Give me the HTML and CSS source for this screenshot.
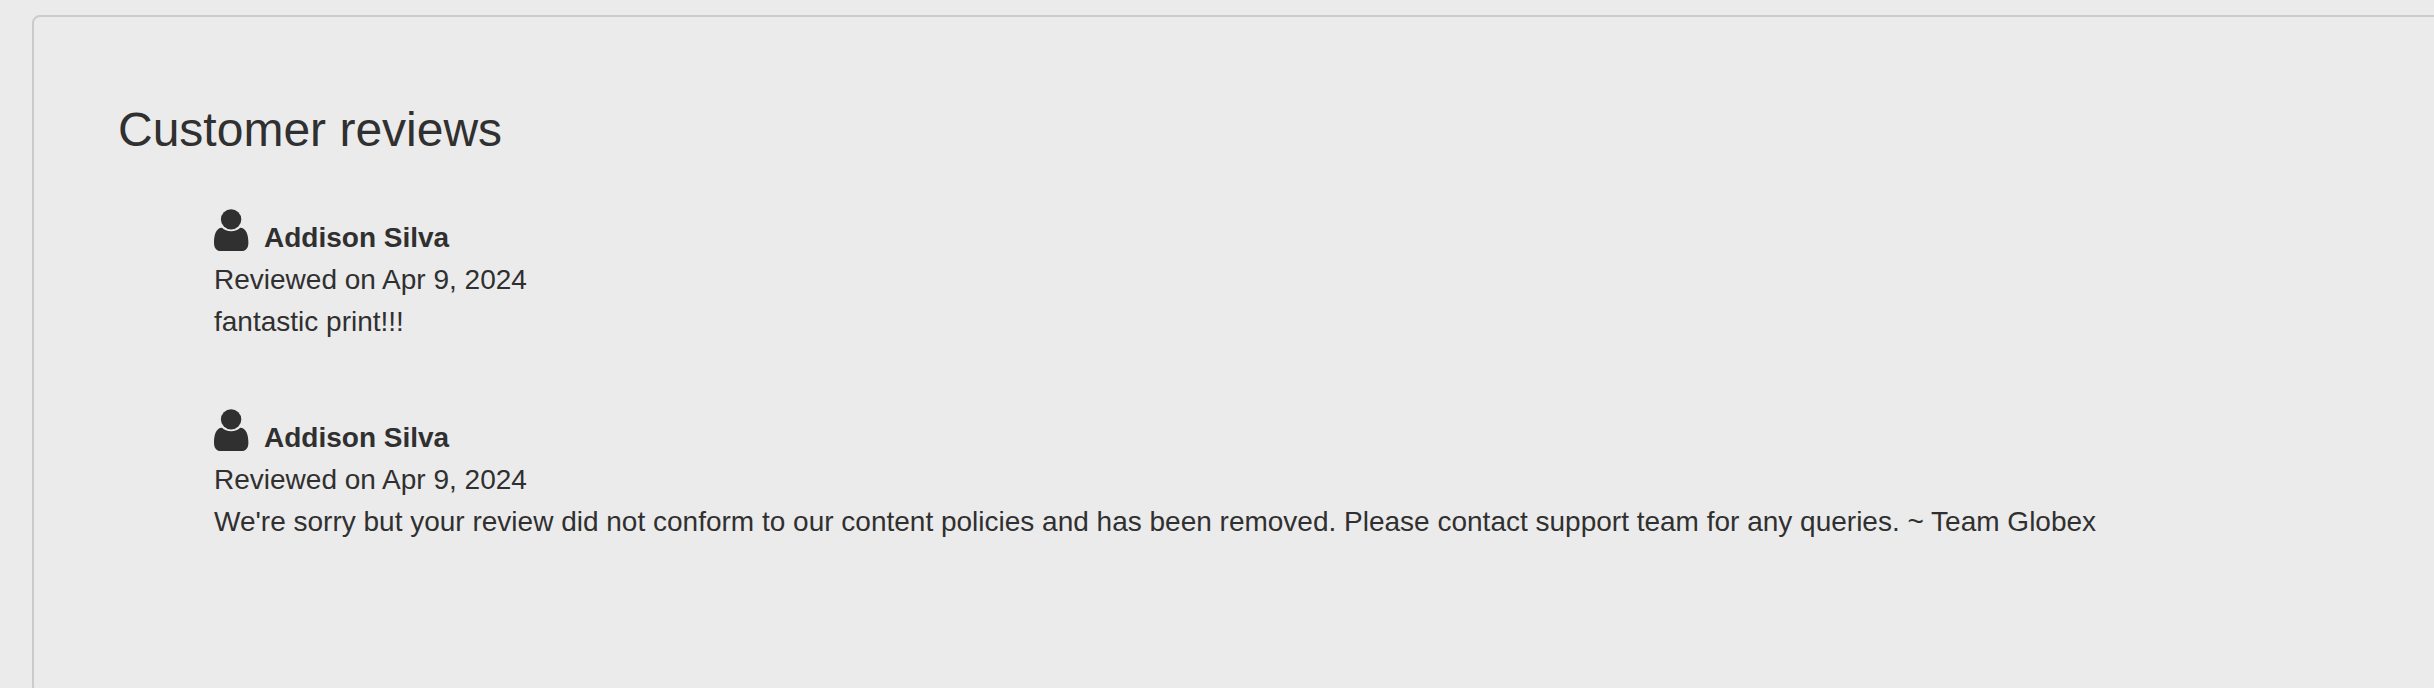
FILE: index.html
```html
<!DOCTYPE html>
<html lang="en">
<head>
<meta charset="utf-8">
<title>Customer reviews</title>
<link rel="stylesheet" href="styles.css">
</head>
<body>
<svg class="defs" aria-hidden="true">
  <symbol id="user" viewBox="0 0 35 43">
    <circle cx="17.1" cy="10.4" r="10.2"/>
    <path d="M8 18.700C10.200 20.900 13.200 22.200 17.100 22.200s6.900-1.300 9.100-3.500c5.900.2 8.200 6.700 8.200 15 0 5.200-2.400 8.300-6.600 8.300H6.600C2.400 42 0 38.900 0 33.700c0-8.300 2.200-14.800 8-15z"/>
  </symbol>
</svg>
<section class="panel">
  <h1 class="title">Customer reviews</h1>
  <div class="reviews">
    <article class="review">
      <div class="author"><svg class="icon"><use href="#user"/></svg><strong class="name">Addison Silva</strong></div>
      <p class="line">Reviewed on Apr 9, 2024</p>
      <p class="line">fantastic print!!!</p>
    </article>
    <article class="review">
      <div class="author"><svg class="icon"><use href="#user"/></svg><strong class="name">Addison Silva</strong></div>
      <p class="line">Reviewed on Apr 9, 2024</p>
      <p class="line">We're sorry but your review did not conform to our content policies and has been removed. Please contact support team for any queries. ~ Team Globex</p>
    </article>
  </div>
</section>
</body>
</html>
```
FILE: styles.css
```css
* { box-sizing: border-box; }
html { background: #ebebeb; overflow: hidden; }
body {
  margin: 0;
  height: 688px;
  overflow: hidden;
  padding: 15px 0 0 32px;
  color: #303030;
  font: 28px/42px "Liberation Sans", Arial, sans-serif;
}
.defs { display: none; }
.panel {
  width: 2460px;
  height: 679px;
  padding: 81px 84px;
  border: 2px solid #cbcbcb;
  border-radius: 8px;
}
.title { margin: 0; font-size: 48px; line-height: 64px; font-weight: 400; }
.reviews {
  display: flex;
  flex-direction: column;
  gap: 66px;
  padding: 47px 0 0 96px;
}
.review { height: 134px; }
.author { display: flex; align-items: flex-start; height: 50px; }
.icon { width: 35px; height: 43px; fill: #303030; }
.name { margin: 8px 0 0 15px; }
.line { margin: 0; white-space: nowrap; }
```
